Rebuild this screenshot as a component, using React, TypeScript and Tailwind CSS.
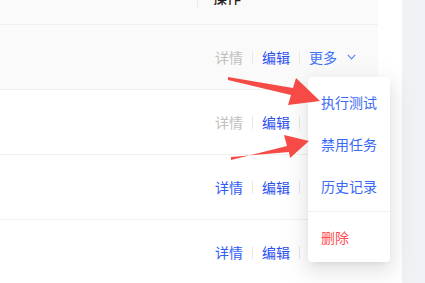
import React from "react";

const font = { fontFamily: '"Noto Sans CJK SC", "Noto Sans", sans-serif' };

type Row = { detailOff?: boolean; more?: boolean; hover?: boolean };

const rows: Row[] = [
  { detailOff: true, more: true, hover: true },
  { detailOff: true },
  {},
  {},
];

const Sep = () => <span className="mx-[9px] h-[13px] w-px bg-[#e8e8e8]" />;

const Chevron = () => (
  <svg width="9" height="6" viewBox="0 0 9 6" className="ml-[10px]">
    <path d="M0.8 0.8 L4.5 4.8 L8.2 0.8" fill="none" stroke="#5b86f7" strokeWidth="1.2" />
  </svg>
);

const TableRow = ({ row }: { row: Row }) => (
  <div
    className={`flex h-[65px] items-center border-b border-[#f0f0f0] ${row.hover ? "bg-[#fafafa]" : "bg-white"}`}
  >
    <div className="w-[197px]" />
    <div className="flex items-center pl-[18px] text-[14px] leading-[22px]">
      <span className={row.detailOff ? "text-[#bfbfbf]" : "text-[#2f5cf5]"}>详情</span>
      <Sep />
      <span className="text-[#2a4ff0]">编辑</span>
      {row.more && (
        <>
          <Sep />
          <span className="text-[#3d72f7]">更多</span>
          <Chevron />
        </>
      )}
      {!row.more && <Sep />}
    </div>
  </div>
);

const MenuItem = ({ label, danger }: { label: string; danger?: boolean }) => (
  <div
    className={`flex h-[42px] items-center pl-[13px] text-[14px] ${danger ? "text-[#ff4d4f]" : "text-[#3a6af5]"}`}
  >
    {label}
  </div>
);

// red annotation arrows drawn over the screenshot
const Arrows = () => (
  <svg className="pointer-events-none absolute left-0 top-0" width="425" height="283">
    <polygon
      points="228,77 293,88 296,78 320,101 288,105 291,95 228,80"
      fill="#f54a45"
    />
    <polygon
      points="231,160 287,146 284,135 309,141 290,158 289,152 231,157"
      fill="#f54a45"
    />
  </svg>
);

export default function App() {
  return (
    <div className="relative flex h-[283px] w-[425px] overflow-hidden bg-[#f0f2f5]" style={font}>
      <div className="w-[402px] bg-white pr-[24px]">
        <div className="w-[378px]">
          <div className="-mt-[30px] flex h-[55px] items-center border-b border-[#f0f0f0] bg-[#fafafa]">
            <div className="w-[197px]" />
            <div className="relative flex h-full items-center pl-[16px] text-[14px] font-medium text-[#1f1f1f]">
              <span className="absolute left-0 top-1/2 h-[22px] w-px -translate-y-1/2 bg-[#ececec]" />
              操作
            </div>
          </div>
          {rows.map((r, i) => (
            <TableRow key={i} row={r} />
          ))}
        </div>
      </div>

      <div className="absolute left-[308px] top-[77px] w-[82px] rounded-[4px] bg-white py-[4px] shadow-[0_6px_16px_rgba(0,0,0,0.08),0_3px_6px_-4px_rgba(0,0,0,0.12),0_9px_28px_8px_rgba(0,0,0,0.05)]">
        <MenuItem label="执行测试" />
        <MenuItem label="禁用任务" />
        <MenuItem label="历史记录" />
        <div className="my-[4px] h-px bg-[#f0f0f0]" />
        <MenuItem label="删除" danger />
      </div>

      <Arrows />
    </div>
  );
}
